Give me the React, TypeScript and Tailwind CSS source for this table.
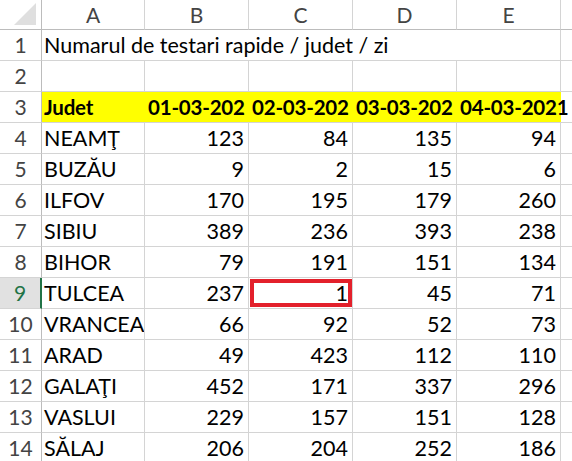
import React from "react";

const rows: [string, number, number, number, number][] = [
  ["NEAMŢ", 123, 84, 135, 94],
  ["BUZĂU", 9, 2, 15, 6],
  ["ILFOV", 170, 195, 179, 260],
  ["SIBIU", 389, 236, 393, 238],
  ["BIHOR", 79, 191, 151, 134],
  ["TULCEA", 237, 1, 45, 71],
  ["VRANCEA", 66, 92, 52, 73],
  ["ARAD", 49, 423, 112, 110],
  ["GALAŢI", 452, 171, 337, 296],
  ["VASLUI", 229, 157, 151, 128],
  ["SĂLAJ", 206, 204, 252, 186],
];

const font = { fontFamily: "Lato, 'Open Sans', sans-serif" };

function RowHead({ n, sel }: { n: number; sel?: boolean }) {
  return (
    <div
      className={
        "w-[42px] h-[31px] shrink-0 flex items-center justify-center text-[21px] border-b border-[#d4d4d4] " +
        (sel
          ? "bg-[#e1e1e1] text-[#217346] border-r-2 border-r-[#217346]"
          : "text-[#444] border-r border-r-[#bcbcbc]")
      }
    >
      {n}
    </div>
  );
}

export default function App() {
  const cell = "h-[31px] shrink-0 border-r border-b border-[#d4d4d4] flex items-center overflow-hidden whitespace-nowrap";
  return (
    <div className="w-[572px] h-[461px] overflow-hidden bg-white text-black" style={font}>
      {/* column header */}
      <div className="flex h-[30px]">
        <div className="w-[42px] shrink-0 border-r border-b border-[#bcbcbc] relative">
          <svg className="absolute right-[5px] bottom-[4px]" width="22" height="22" viewBox="0 0 22 22">
            <polygon points="22,0 22,22 0,22" fill="#dfdfdf" />
          </svg>
        </div>
        {["A", "B", "C", "D", "E"].map((c, i) => (
          <div
            key={c}
            className={
              (i === 0 ? "w-[103px]" : "w-[104px]") +
              " shrink-0 border-r border-b border-r-[#d4d4d4] border-b-[#bcbcbc] flex items-center justify-center text-[21px] text-[#444]"
            }
          >
            {c}
          </div>
        ))}
        <div className="flex-1 border-b border-[#bcbcbc]" />
      </div>

      {/* row 1 */}
      <div className="flex">
        <RowHead n={1} />
        <div className="flex-1 h-[31px] border-b border-[#d4d4d4] flex items-center pl-[2px] text-[21.5px] relative">
          <span className="whitespace-nowrap">Numarul de testari rapide / judet / zi</span>
          <div className="absolute left-[518px] top-0 bottom-0 border-r border-[#d4d4d4]" />
        </div>
      </div>

      {/* row 2 */}
      <div className="flex">
        <RowHead n={2} />
        <div className={cell + " w-[103px]"} />
        <div className={cell + " w-[104px]"} />
        <div className={cell + " w-[104px]"} />
        <div className={cell + " w-[104px]"} />
        <div className={cell + " w-[104px]"} />
        <div className="flex-1 h-[31px] border-b border-[#d4d4d4]" />
      </div>

      {/* row 3 */}
      <div className="flex">
        <RowHead n={3} />
        <div className="flex bg-[#ffff00] font-bold text-[20.5px] tracking-[-0.2px]">
          <div className="w-[103px] h-[31px] shrink-0 flex items-center pl-[2px] border-b border-[#d4d4d4]">Judet</div>
          {["01-03-202", "02-03-202", "03-03-202"].map((d) => (
            <div key={d} className="w-[104px] h-[31px] shrink-0 flex items-center pl-[3px] whitespace-nowrap border-b border-[#d4d4d4]">
              {d}
            </div>
          ))}
          <div className="w-[104px] h-[31px] shrink-0 flex items-center pl-[3px] whitespace-nowrap border-b border-[#d4d4d4] relative z-10">
            04-03-2021
          </div>
        </div>
        <div className="flex-1 h-[31px] border-b border-[#d4d4d4]" />
      </div>

      {rows.map((r, idx) => {
        const n = idx + 4;
        const sel = n === 9;
        return (
          <div key={n} className="flex">
            <RowHead n={n} sel={sel} />
            <div className={cell + " w-[103px] pl-[2px] text-[21.5px]"}>{r[0]}</div>
            {[r[1], r[2], r[3], r[4]].map((v, j) => (
              <div key={j} className={cell + " w-[104px] justify-end pr-[4px] text-[21.5px] relative"}>
                {sel && j === 1 && (
                  <div className="absolute left-[1px] right-0 top-[1px] bottom-[1px] border-[4px] border-[#e3202b]" />
                )}
                <span className="relative">{v}</span>
              </div>
            ))}
            <div className="flex-1 h-[31px] border-b border-[#d4d4d4]" />
          </div>
        );
      })}
    </div>
  );
}
